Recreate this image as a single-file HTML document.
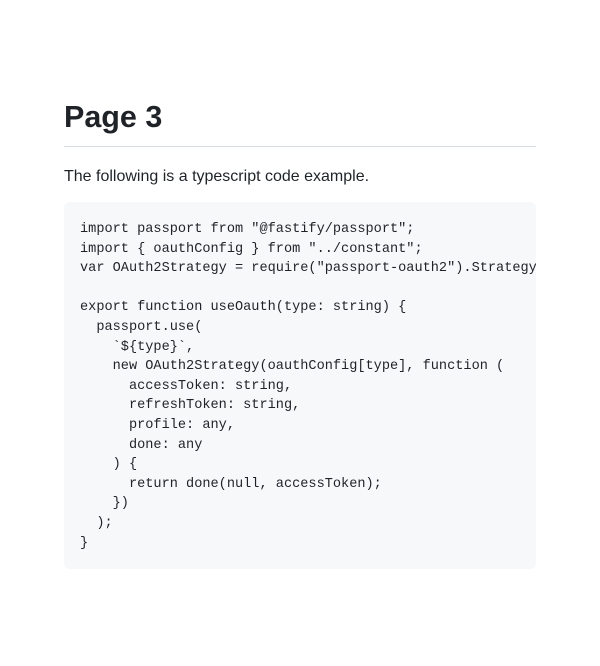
<!DOCTYPE html>
<html><head><style>
body{margin:0;background:#fff;color:#1f2328;font-family:"Liberation Sans",sans-serif;font-size:16px;line-height:1.5}
.c{position:absolute;left:64px;top:97px;width:472px}
h1{margin:0;font-size:30.5px;line-height:41px;font-weight:700;padding-bottom:8px;border-bottom:1px solid #d8dee4}
p{margin:18px 0 13px}
pre{margin:0;background:#f6f8fa;border-radius:6px;padding:18px 16px 16px;overflow:hidden;font-family:"Liberation Mono",monospace;font-size:13.6px;line-height:19.6px;color:#1f2328;white-space:pre}
</style></head><body><div class="c">
<h1>Page 3</h1>
<p>The following is a typescript code example.</p>
<pre>import passport from "@fastify/passport";
import { oauthConfig } from "../constant";
var OAuth2Strategy = require("passport-oauth2").Strategy;

export function useOauth(type: string) {
  passport.use(
    `${type}`,
    new OAuth2Strategy(oauthConfig[type], function (
      accessToken: string,
      refreshToken: string,
      profile: any,
      done: any
    ) {
      return done(null, accessToken);
    })
  );
}</pre>
</div></body></html>
